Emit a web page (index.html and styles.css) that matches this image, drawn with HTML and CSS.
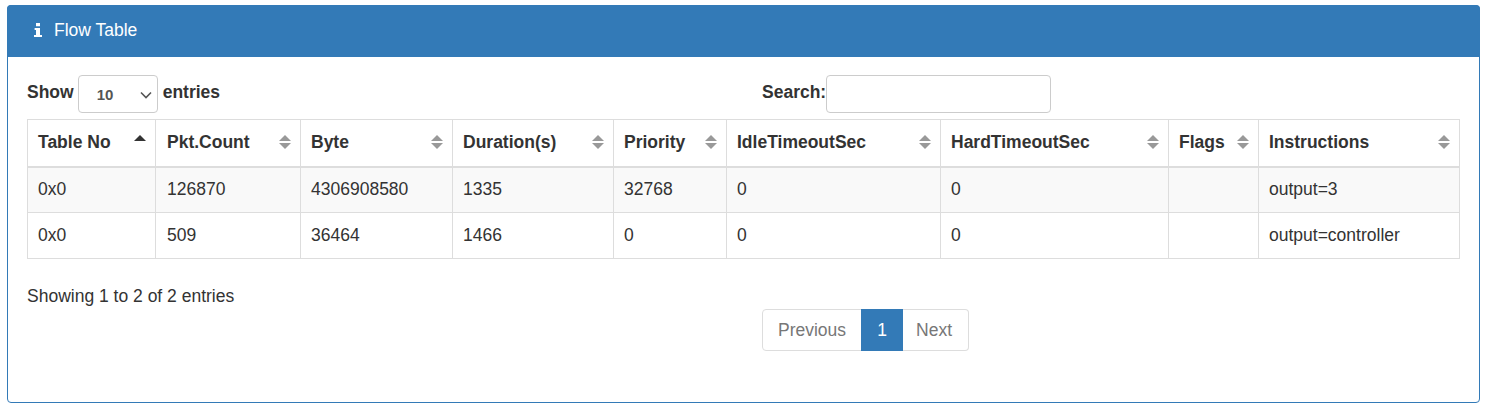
FILE: index.html
```html
<!DOCTYPE html>
<html lang="en">
<head>
    <meta charset="UTF-8">
    <meta name="viewport" content="width=device-width, initial-scale=1.0">
    <title>Flow Table</title>
    <link rel="stylesheet" href="styles.css">
</head>
<body>
    <div class="panel">
        <div class="panel-heading">
            <svg class="info-icon" viewBox="0 0 8 14" width="8" height="14" aria-hidden="true">
                <path d="M2 0h4v3.2H2z M.6 5H6v7H8v2H0v-2h2V7H.6z" fill="#fff"/>
            </svg>
            <span>Flow Table</span>
        </div>
        <div class="panel-body">
            <div class="table-controls">
                <label class="length-label">Show
                    <span class="fake-select">10
                        <svg class="chevron" viewBox="0 0 12 8" width="12" height="8" aria-hidden="true">
                            <path d="M1 1.5l5 5 5-5" fill="none" stroke="#555" stroke-width="1.6"/>
                        </svg>
                    </span>
                    entries</label>
                <label class="search-label">Search:<input type="text" class="search-input"></label>
            </div>

            <table class="flow-table">
                <colgroup>
                    <col class="col-table">
                    <col class="col-packets">
                    <col class="col-byte">
                    <col class="col-duration">
                    <col class="col-priority">
                    <col class="col-idle">
                    <col class="col-hard">
                    <col class="col-flags">
                    <col class="col-instructions">
                </colgroup>
                <thead>
                    <tr>
                        <th class="sorted">Table No</th>
                        <th>Pkt.Count</th>
                        <th>Byte</th>
                        <th>Duration(s)</th>
                        <th>Priority</th>
                        <th>IdleTimeoutSec</th>
                        <th>HardTimeoutSec</th>
                        <th>Flags</th>
                        <th>Instructions</th>
                    </tr>
                </thead>
                <tbody>
                    <tr class="odd">
                        <td>0x0</td>
                        <td>126870</td>
                        <td>4306908580</td>
                        <td>1335</td>
                        <td>32768</td>
                        <td>0</td>
                        <td>0</td>
                        <td></td>
                        <td>output=3</td>
                    </tr>
                    <tr>
                        <td>0x0</td>
                        <td>509</td>
                        <td>36464</td>
                        <td>1466</td>
                        <td>0</td>
                        <td>0</td>
                        <td>0</td>
                        <td></td>
                        <td>output=controller</td>
                    </tr>
                </tbody>
            </table>

            <div class="table-info">Showing 1 to 2 of 2 entries</div>

            <div class="pagination-row">
                <ul class="pagination">
                    <li>Previous</li>
                    <li class="active">1</li>
                    <li>Next</li>
                </ul>
            </div>
        </div>
    </div>
</body>
</html>
```

FILE: styles.css
```css
* {
    box-sizing: border-box;
}
body {
    font-family: "Liberation Sans", Arial, sans-serif;
    font-size: 17.5px;
    margin: 5px 12px 0 7px;
    background-color: #fff;
    color: #333;
}
.panel {
    height: 398px;
    border: 1px solid #337ab7;
    border-radius: 4px;
}
.panel-heading {
    display: flex;
    align-items: center;
    gap: 12px;
    margin: -1px -1px 0;
    padding: 0 0 2px 27px;
    height: 52px;
    background-color: #337ab7;
    color: #fff;
    border-radius: 4px 4px 0 0;
}
.panel-body {
    padding: 18px 19px 0;
}
.table-controls {
    display: grid;
    grid-template-columns: 735px 1fr;
    height: 38px;
    margin-bottom: 6px;
    font-weight: bold;
}
.length-label, .search-label {
    display: flex;
    align-items: center;
    height: 38px;
    padding-bottom: 4px;
}
.length-label {
    gap: 4px;
}
.fake-select {
    display: flex;
    align-items: center;
    position: relative;
    width: 80px;
    height: 38px;
    margin-right: 1px;
    margin-bottom: -4px;
    padding: 0 0 0 18px;
    border: 1px solid #ccc;
    border-radius: 4px;
    font-size: 15px;
    color: #555;
}
.chevron {
    position: absolute;
    right: 5px;
    top: 15px;
}
.search-input {
    width: 225px;
    height: 38px;
    margin-bottom: -4px;
    border: 1px solid #ccc;
    border-radius: 4px;
}
.flow-table {
    width: 1432px;
    table-layout: fixed;
    border-collapse: collapse;
}
.col-table { width: 128px; }
.col-packets { width: 145px; }
.col-byte { width: 152px; }
.col-duration { width: 161px; }
.col-priority { width: 113px; }
.col-idle { width: 214px; }
.col-hard { width: 228px; }
.col-flags { width: 90px; }
.col-instructions { width: 201px; }
.flow-table th, .flow-table td {
    border: 1px solid #ddd;
    padding: 0 10px;
    text-align: left;
}
.flow-table th:nth-child(2), .flow-table td:nth-child(2) {
    padding-left: 11px;
}
.flow-table th {
    position: relative;
    height: 47px;
    border-bottom-width: 2px;
    vertical-align: middle;
}
/* sort arrows */
.flow-table th::before, .flow-table th::after {
    content: "";
    position: absolute;
    right: 9px;
    border-left: 6px solid transparent;
    border-right: 6px solid transparent;
}
.flow-table th::before {
    top: 15px;
    border-bottom: 6px solid #999;
}
.flow-table th::after {
    top: 23px;
    border-top: 6px solid #999;
}
.flow-table th.sorted::before {
    top: 15px;
    border-bottom-color: #333;
}
.flow-table th.sorted::after {
    display: none;
}
.flow-table td {
    height: 46px;
}
.odd td {
    background-color: #f9f9f9;
}
.table-info {
    margin-top: 28px;
    line-height: 18px;
}
.pagination-row {
    padding: 4px 0 0 735px;
}
.pagination {
    display: flex;
    width: 207px;
    height: 42px;
    margin: 0;
    padding: 0;
    list-style-type: none;
    color: #777;
}
.pagination li {
    display: flex;
    align-items: center;
    padding: 0 15px;
    border: 1px solid #ddd;
}
.pagination li:first-child {
    border-radius: 4px 0 0 4px;
}
.pagination li:last-child {
    flex: 0 0 66px;
    padding: 0 13px;
    border-left: none;
    border-radius: 0 4px 4px 0;
}
.pagination .active {
    flex: 0 0 42px;
    justify-content: center;
    margin-left: -1px;
    padding: 0;
    background-color: #337ab7;
    border-color: #337ab7;
    color: #fff;
}
```
